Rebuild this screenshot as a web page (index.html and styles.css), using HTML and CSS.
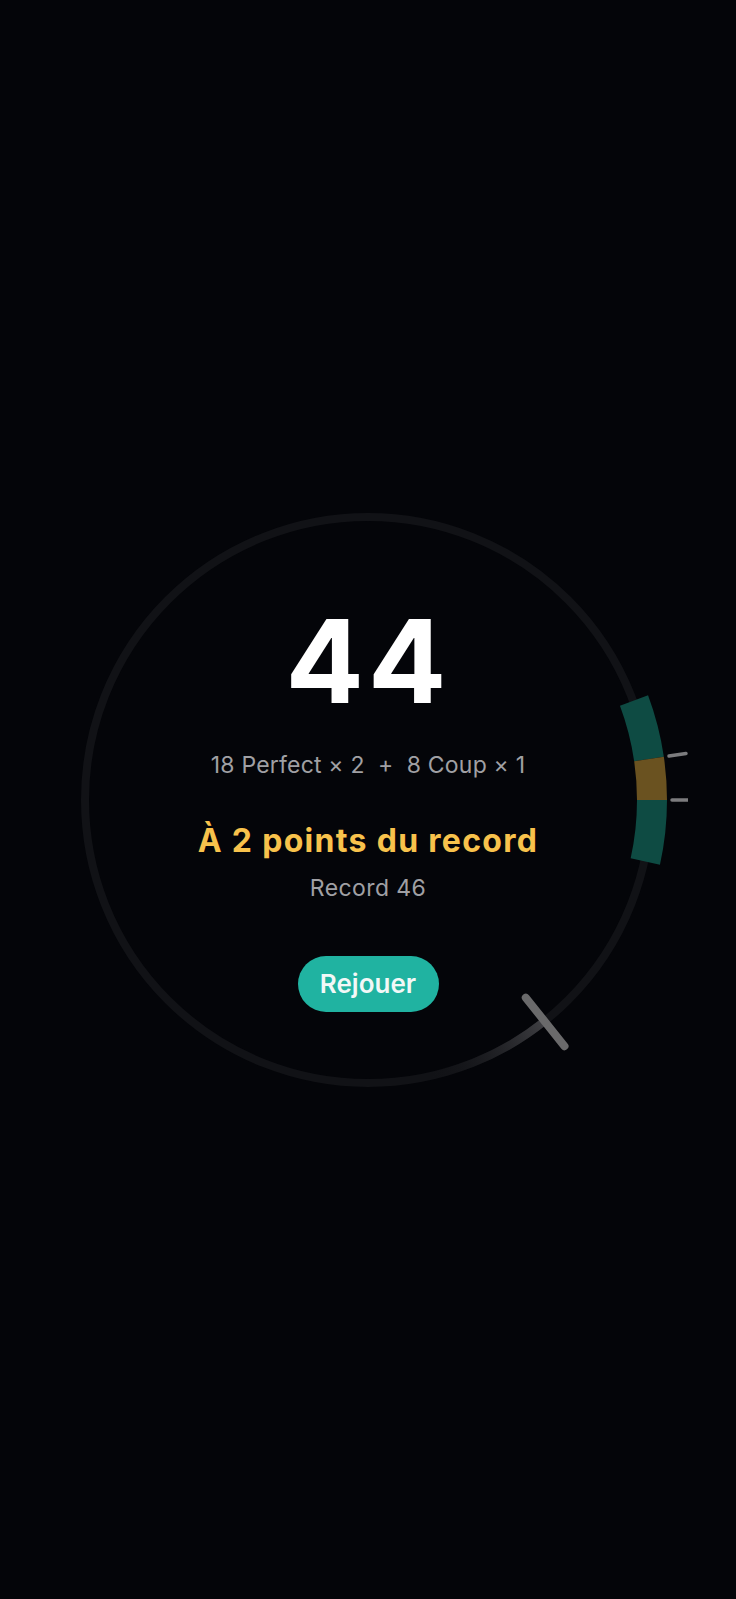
FILE: index.html
```html
<!DOCTYPE html>
<html lang="fr">

<head>
    <meta charset="UTF-8">
    <meta name="viewport" content="width=device-width, initial-scale=1.0">
    <title>Score</title>
    <link rel="stylesheet" href="styles.css">
</head>

<body>
    <main class="screen">
        <section class="dial">
            <svg class="dial-ring" width="640" height="640" viewBox="0 0 640 640">
                <defs>
                    <linearGradient id="trail" gradientUnits="userSpaceOnUse" x1="497" y1="541" x2="380" y2="598">
                        <stop offset="0" stop-color="#46464a" stop-opacity="0.9"/>
                        <stop offset="1" stop-color="#121317" stop-opacity="0"/>
                    </linearGradient>
                </defs>
                <!-- track -->
                <circle cx="320" cy="320" r="283" fill="none" stroke="#111216" stroke-width="8"/>
                <!-- target zone -->
                <path d="M586.0 220.5 A284 284 0 0 1 601.0 279.0" fill="none" stroke="#0e4b43" stroke-width="30"/>
                <path d="M601.0 279.0 A284 284 0 0 1 604 320" fill="none" stroke="#6a5220" stroke-width="30"/>
                <path d="M604 320 A284 284 0 0 1 597.3 381.5" fill="none" stroke="#0e4b43" stroke-width="30"/>
                <!-- ticks -->
                <line x1="621" y1="276" x2="638" y2="273.5" stroke="#7c7c7e" stroke-width="3.5" stroke-linecap="round"/>
                <line x1="624" y1="320" x2="641" y2="320" stroke="#7c7c7e" stroke-width="3.5" stroke-linecap="round"/>
                <!-- needle trail -->
                <path d="M496.6 541.2 A283 283 0 0 1 383.0 595.9" fill="none" stroke="url(#trail)" stroke-width="8"/>
                <!-- needle -->
                <line x1="477.8" y1="517.7" x2="516.5" y2="566.2" stroke="#6a6a6b" stroke-width="8" stroke-linecap="round"/>
            </svg>
            <div class="score">44</div>
            <p class="breakdown">18 Perfect × 2  +  8 Coup × 1</p>
            <p class="gap">À 2 points du record</p>
            <p class="best">Record 46</p>
            <button class="replay">Rejouer</button>
        </section>
    </main>
</body>

</html>
```

FILE: styles.css
```css
* {
    padding: 0;
    margin: 0;
    box-sizing: border-box;
}

body {
    background: #040509;
    font-family: Inter, "Noto Sans", sans-serif;
    color: #fff;
}

.screen {
    height: 1599px;
    display: flex;
    justify-content: center;
    align-items: center;
}

.dial {
    width: 640px;
    height: 640px;
    position: relative;
    display: flex;
    flex-direction: column;
    align-items: center;
    padding-top: 123px;
}

.dial-ring {
    position: absolute;
    left: 0;
    top: 0;
}

.score,
.breakdown,
.gap,
.best,
.replay {
    position: relative;
}

.score {
    font-size: 116px;
    line-height: 116px;
    font-weight: 700;
    letter-spacing: 4px;
    color: #fff;
}

.breakdown {
    margin-top: 32px;
    font-size: 23px;
    line-height: 28px;
    letter-spacing: 0.2px;
    color: #a0a0a4;
    white-space: pre;
}

.gap {
    margin-top: 44px;
    font-size: 32px;
    line-height: 36px;
    font-weight: 700;
    letter-spacing: 1.3px;
    color: #f8c24c;
}

.best {
    margin-top: 15px;
    font-size: 23px;
    line-height: 28px;
    letter-spacing: 0.4px;
    color: #a0a0a4;
}

.replay {
    margin-top: 54px;
    width: 141px;
    height: 56px;
    border: none;
    border-radius: 28px;
    background: #20b3a1;
    color: #f2f8f7;
    font-family: inherit;
    font-size: 26px;
    font-weight: 600;
    cursor: pointer;
}
```
